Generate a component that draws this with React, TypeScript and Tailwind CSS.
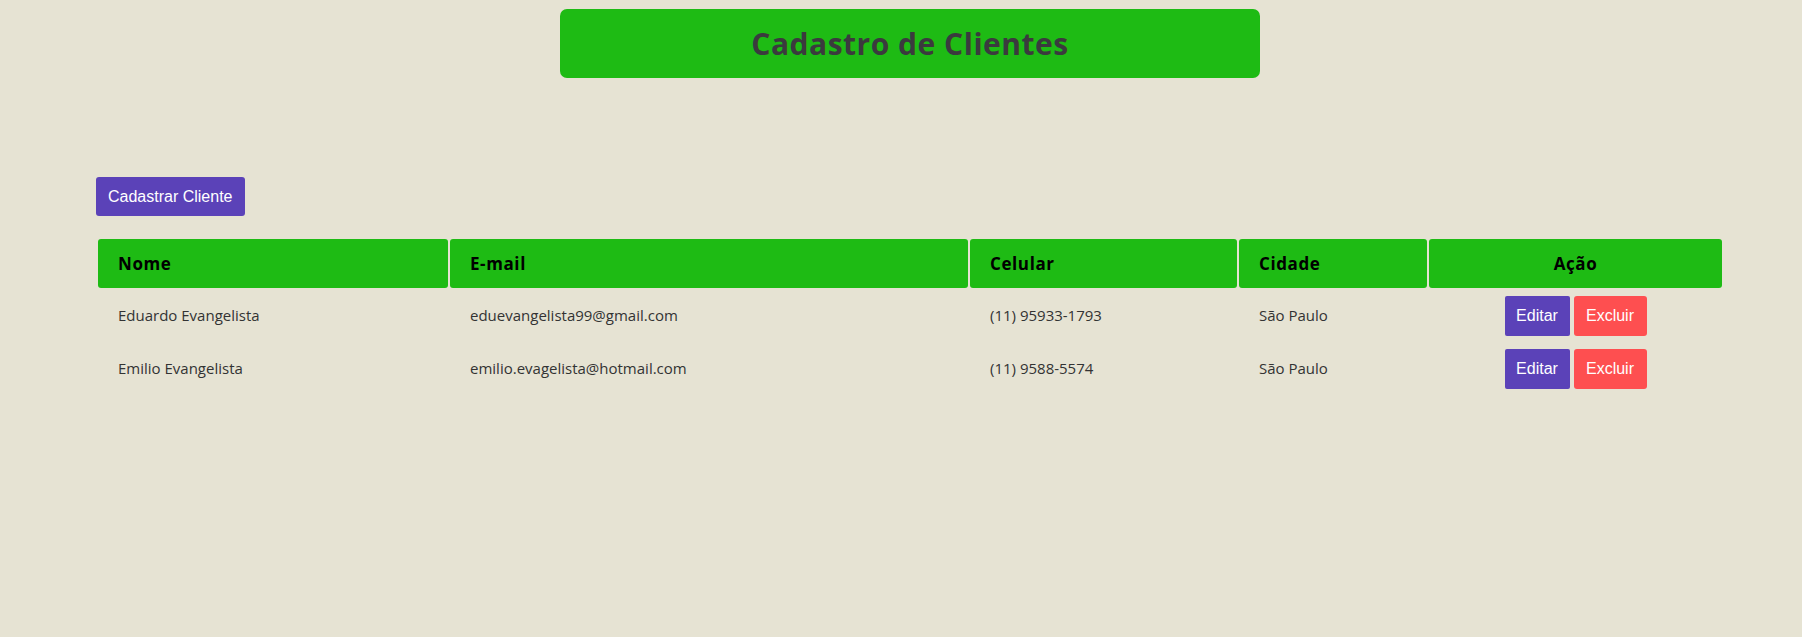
const clientes = [
  { nome: "Eduardo Evangelista", email: "eduevangelista99@gmail.com", celular: "(11) 95933-1793", cidade: "São Paulo" },
  { nome: "Emilio Evangelista", email: "emilio.evagelista@hotmail.com", celular: "(11) 9588-5574", cidade: "São Paulo" },
];

const font = { fontFamily: "'Open Sans', sans-serif" };

export default function App() {
  return (
    <div className="min-h-[637px] w-full bg-[#e6e3d3] font-['Open_Sans',sans-serif]" style={font}>
      {/* cabeçalho */}
      <div className="pl-[18px] pt-[9px]">
        <div className="mx-auto flex h-[69px] w-[700px] items-center justify-center rounded-[7px] bg-[#1ebb14]">
          <h1 className="text-[30px] font-bold tracking-[0.5px] text-[#3b3a3e]">Cadastro de Clientes</h1>
        </div>
      </div>

      <div className="pl-[96px] pt-[99px]">
        <button className="h-[39px] rounded-[3px] bg-[#5b42b8] px-[12px] font-['Liberation_Sans',Arial,sans-serif] text-[16px] text-white">
          Cadastrar Cliente
        </button>

        <table className="mt-[21px] w-[1628px] border-separate border-spacing-[2px] text-left">
          <thead>
            <tr className="h-[49px] text-[17px] font-bold tracking-[0.6px] text-black">
              <th className="w-[350px] rounded-[3px] bg-[#1ebb14] pl-[20px] font-bold">Nome</th>
              <th className="w-[518px] rounded-[3px] bg-[#1ebb14] pl-[20px] font-bold">E-mail</th>
              <th className="w-[267px] rounded-[3px] bg-[#1ebb14] pl-[20px] font-bold">Celular</th>
              <th className="w-[188px] rounded-[3px] bg-[#1ebb14] pl-[20px] font-bold">Cidade</th>
              <th className="rounded-[3px] bg-[#1ebb14] text-center font-bold">Ação</th>
            </tr>
          </thead>
          <tbody>
            {clientes.map((c) => (
              <tr key={c.email} className="h-[51px] text-[15px] text-[#333]">
                <td className="pl-[20px]">{c.nome}</td>
                <td className="pl-[20px]">{c.email}</td>
                <td className="pl-[20px]">{c.celular}</td>
                <td className="pl-[20px]">{c.cidade}</td>
                <td className="text-center">
                  <div className="flex justify-center gap-[4px] font-['Liberation_Sans',Arial,sans-serif] text-[16px] text-white">
                    <button className="h-[40px] w-[65px] rounded-[2px] bg-[#5b42b8]">Editar</button>
                    <button className="h-[40px] w-[73px] rounded-[3px] bg-[#fe4f50]">Excluir</button>
                  </div>
                </td>
              </tr>
            ))}
          </tbody>
        </table>
      </div>
    </div>
  );
}
